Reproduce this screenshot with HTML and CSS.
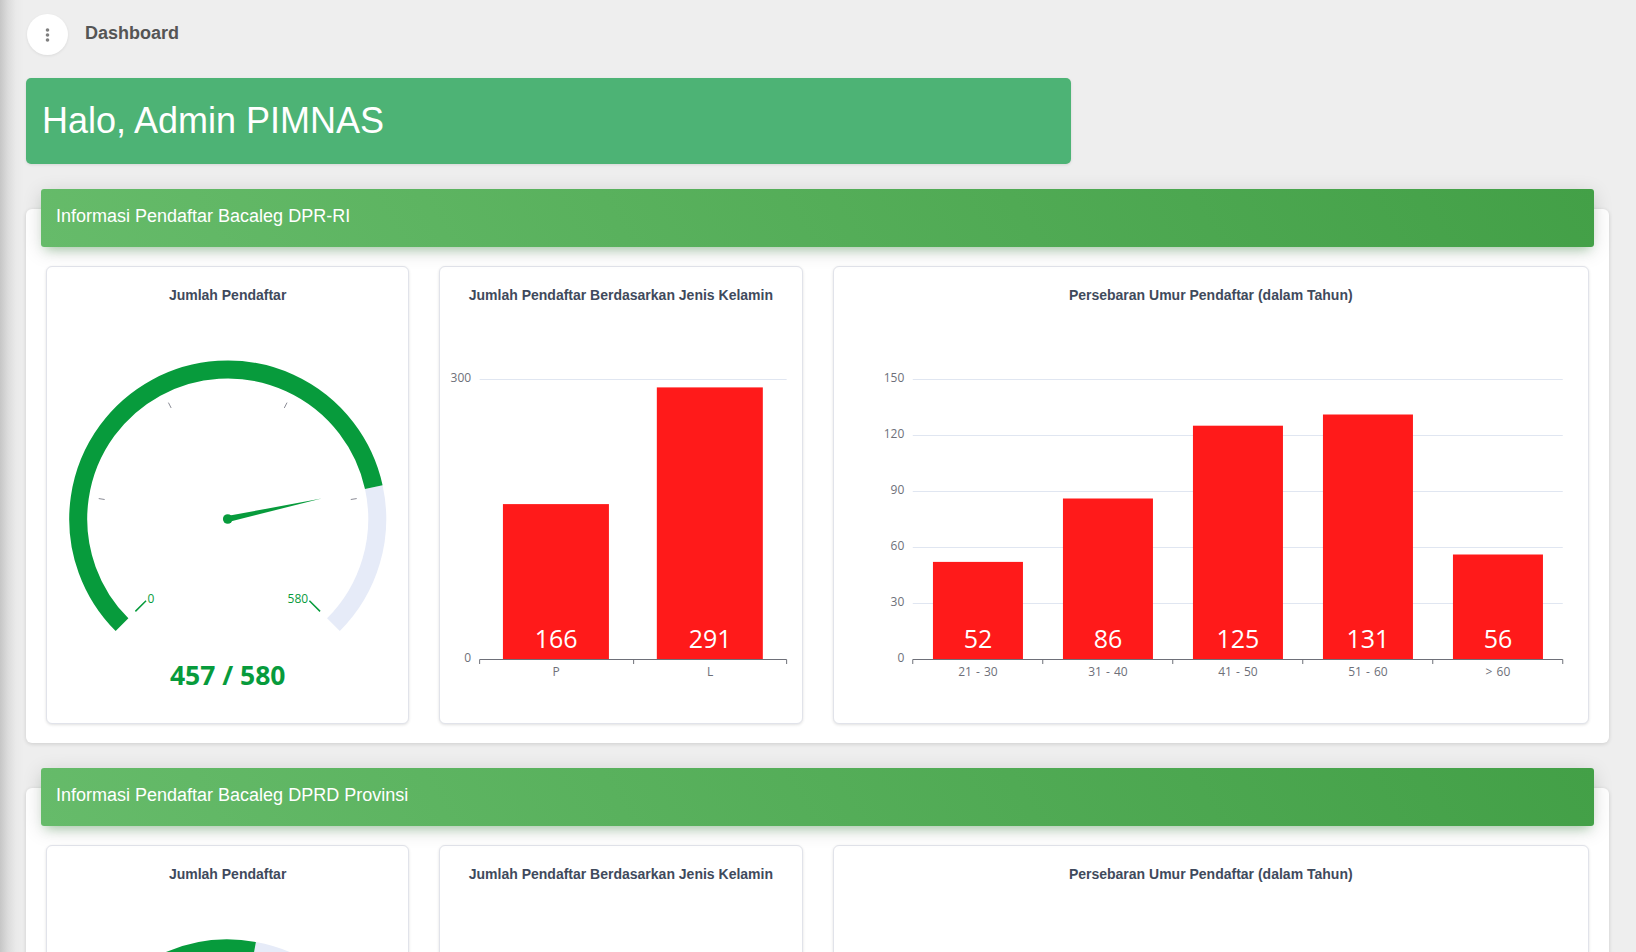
FILE: index.html
```html
<!DOCTYPE html>
<html lang="id">
<head>
  <meta charset="UTF-8" />
  <meta name="viewport" content="width=device-width, initial-scale=1.0"/>
  <title>Dashboard</title>
  <link rel="stylesheet" href="styles.css">
</head>
<body>

<div class="content">
  <div class="topbar">
    <button class="menu-toggle" aria-label="Menu">
      <svg width="6" height="16" viewBox="0 0 6 16"><circle cx="2.5" cy="3" r="1.8"/><circle cx="2.5" cy="8" r="1.8"/><circle cx="2.5" cy="13" r="1.8"/></svg>
    </button>
    <span class="page-title">Dashboard</span>
  </div>

  <div class="hello">Halo, Admin PIMNAS</div>

  <!-- DPR-RI -->
  <section class="panel">
    <div class="panel-head">Informasi Pendaftar Bacaleg DPR-RI</div>
    <div class="chart-grid">
      <div class="chart-card">
        <div class="chart-title">Jumlah Pendaftar</div>
        <svg class="chart" viewBox="0 0 361 403">
          <path class="gauge-track" d="M326.67 168.15A149.5 149.5 0 0 1 286.31 305.71"/>
          <path class="gauge-fill" d="M74.89 305.71A149.5 149.5 0 1 1 326.67 168.15"/>
          <path class="gauge-tick" d="M57.54 180.51L51.61 179.57M124.03 88.98L121.31 83.63M237.17 88.98L239.89 83.63M303.66 180.51L309.59 179.57"/>
          <path class="gauge-end" d="M98.93 281.67L88.25 292.35M262.27 281.67L272.95 292.35"/>
          <text class="gauge-label" x="103.7" y="284">0</text>
          <text class="gauge-label" x="250.7" y="284">580</text>
          <polygon class="gauge-needle" points="274.4,179.55 181.24,202.93 179.96,197.07"/>
          <circle class="gauge-needle" cx="180.6" cy="200" r="4.8"/>
          <text class="gauge-value" x="180.6" y="365.5">457 / 580</text>
        </svg>
      </div>

      <div class="chart-card">
        <div class="chart-title">Jumlah Pendaftar Berdasarkan Jenis Kelamin</div>
        <svg class="chart" viewBox="0 0 361 403">
          <path class="grid-line" d="M39.5 60.5H346.5"/>
          <text class="axis-label y-label" x="31" y="63">300</text>
          <text class="axis-label y-label" x="31" y="343">0</text>
          <rect class="bar" x="62.8" y="185.1" width="106" height="154.9"/>
          <rect class="bar" x="216.7" y="68.4" width="106" height="271.6"/>
          <path class="axis-line" d="M39.5 345V340.5H346.5V345M193.5 340.5V345"/>
          <text class="bar-value" x="116" y="329">166</text>
          <text class="bar-value" x="270" y="329">291</text>
          <text class="axis-label" x="116" y="357">P</text>
          <text class="axis-label" x="270" y="357">L</text>
        </svg>
      </div>

      <div class="chart-card wide">
        <div class="chart-title">Persebaran Umur Pendaftar (dalam Tahun)</div>
        <svg class="chart" viewBox="0 0 754 403">
          <path class="grid-line" d="M78.5 60.5H728.5M78.5 116.5H728.5M78.5 172.5H728.5M78.5 228.5H728.5M78.5 284.5H728.5"/>
          <text class="axis-label y-label" x="70" y="63">150</text>
          <text class="axis-label y-label" x="70" y="119">120</text>
          <text class="axis-label y-label" x="70" y="175">90</text>
          <text class="axis-label y-label" x="70" y="231">60</text>
          <text class="axis-label y-label" x="70" y="287">30</text>
          <text class="axis-label y-label" x="70" y="343">0</text>
          <rect class="bar" x="98.7" y="242.9" width="90" height="97.1"/>
          <rect class="bar" x="228.7" y="179.5" width="90" height="160.5"/>
          <rect class="bar" x="358.7" y="106.7" width="90" height="233.3"/>
          <rect class="bar" x="488.7" y="95.5" width="90" height="244.5"/>
          <rect class="bar" x="618.7" y="235.5" width="90" height="104.5"/>
          <path class="axis-line" d="M78.5 345V340.5H728.5V345M208.5 340.5V345M338.5 340.5V345M468.5 340.5V345M598.5 340.5V345"/>
          <text class="bar-value" x="143.7" y="329">52</text>
          <text class="bar-value" x="273.7" y="329">86</text>
          <text class="bar-value" x="403.7" y="329">125</text>
          <text class="bar-value" x="533.7" y="329">131</text>
          <text class="bar-value" x="663.7" y="329">56</text>
          <text class="axis-label" x="143.7" y="357">21 - 30</text>
          <text class="axis-label" x="273.7" y="357">31 - 40</text>
          <text class="axis-label" x="403.7" y="357">41 - 50</text>
          <text class="axis-label" x="533.7" y="357">51 - 60</text>
          <text class="axis-label" x="663.7" y="357">&gt; 60</text>
        </svg>
      </div>
    </div>
  </section>

  <!-- DPRD Provinsi -->
  <section class="panel">
    <div class="panel-head">Informasi Pendaftar Bacaleg DPRD Provinsi</div>
    <div class="chart-grid">
      <div class="chart-card">
        <div class="chart-title">Jumlah Pendaftar</div>
        <svg class="chart" viewBox="0 0 361 403">
          <path class="gauge-track" d="M207.18 52.88A149.5 149.5 0 0 1 286.31 305.71"/>
          <path class="gauge-fill" d="M74.89 305.71A149.5 149.5 0 0 1 207.18 52.88"/>
        </svg>
      </div>
      <div class="chart-card">
        <div class="chart-title">Jumlah Pendaftar Berdasarkan Jenis Kelamin</div>
      </div>
      <div class="chart-card wide">
        <div class="chart-title">Persebaran Umur Pendaftar (dalam Tahun)</div>
      </div>
    </div>
  </section>
</div>

</body>
</html>
```

FILE: styles.css
```css
html, body {
  height: 100%;
  overflow: hidden;
}
body {
  margin: 0;
  font-family: "Liberation Sans", Arial, sans-serif;
  background: linear-gradient(90deg, #c6c6c6 0, #dcdcdc 8px, #eaeaea 16px, #eeeeee 24px);
}
.content {
  padding: 14px 27px 0 26px;
}
.topbar {
  display: flex;
  align-items: center;
  gap: 17px;
  margin-left: 1px;
}
.menu-toggle {
  display: flex;
  align-items: center;
  justify-content: center;
  width: 41px;
  height: 41px;
  padding: 0;
  background: white;
  border: none;
  border-radius: 50%;
  box-shadow: 0 1px 3px rgba(0,0,0,0.08);
}
.menu-toggle svg {
  fill: #808080;
}
.page-title {
  padding-bottom: 3px;
  font-size: 18px;
  font-weight: bold;
  color: #555;
}
.hello {
  width: 1045px;
  height: 86px;
  margin-top: 23px;
  padding-left: 16px;
  box-sizing: border-box;
  line-height: 86px;
  font-size: 36px;
  color: white;
  background: #4db375;
  border-radius: 5px;
  box-shadow: 0 1px 3px rgba(0,0,0,0.1);
}
.panel {
  height: 534px;
  margin-top: 45px;
  padding: 0 20px;
  box-sizing: border-box;
  background: white;
  border-radius: 6px;
  box-shadow: 0 1px 4px rgba(0,0,0,0.14);
}
.panel-head {
  position: relative;
  top: -20px;
  height: 58px;
  margin: 0 -5px;
  padding-left: 15px;
  line-height: 55px;
  font-size: 18px;
  color: white;
  background: linear-gradient(60deg, #66bb6a, #43a047);
  border-radius: 3px;
  box-shadow: 0 4px 20px 0 rgba(0,0,0,0.14), 0 7px 10px -5px rgba(76,175,80,0.4);
}
.chart-grid {
  display: grid;
  grid-template-columns: repeat(4, 1fr);
  gap: 30px;
  margin-top: -1px;
}
.chart-card {
  height: 458px;
  box-sizing: border-box;
  background: white;
  border: 1px solid #e1e3ea;
  border-radius: 6px;
  box-shadow: 0 1px 3px rgba(0,0,0,0.12);
}
.chart-card.wide {
  grid-column: span 2;
}
.chart-title {
  height: 52px;
  padding-top: 20px;
  box-sizing: border-box;
  text-align: center;
  font-size: 14px;
  line-height: 17px;
  font-weight: bold;
  color: #3f4a5c;
}
.chart {
  display: block;
  width: 100%;
  height: 403px;
  font-family: "Open Sans", sans-serif;
}
.gauge-track, .gauge-fill {
  fill: none;
  stroke-width: 18;
}
.gauge-track {
  stroke: #e6ebf8;
}
.gauge-fill {
  stroke: #079b3c;
}
.gauge-tick {
  fill: none;
  stroke: #8b8c96;
  stroke-width: 1;
}
.gauge-end {
  fill: none;
  stroke: #079b3c;
  stroke-width: 1.5;
}
.gauge-label {
  text-anchor: middle;
  font-size: 12px;
  fill: #079b3c;
}
.gauge-needle {
  fill: #079b3c;
}
.gauge-value {
  text-anchor: middle;
  font-size: 26.5px;
  font-weight: bold;
  fill: #079b3c;
}
.grid-line {
  fill: none;
  stroke: #e0e6f1;
  stroke-width: 1;
}
.axis-line {
  fill: none;
  stroke: #6e7079;
  stroke-width: 1;
}
.axis-label {
  text-anchor: middle;
  font-size: 12px;
  word-spacing: 1px;
  fill: #6e7079;
}
.y-label {
  text-anchor: end;
}
.bar {
  fill: #ff1a1a;
}
.bar-value {
  text-anchor: middle;
  font-size: 25px;
  fill: #fff;
}
```
